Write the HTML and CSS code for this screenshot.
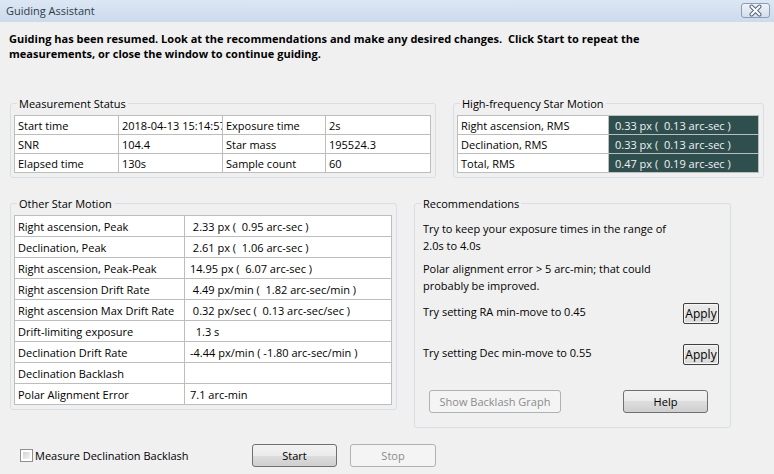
FILE: index.html
```html
<!DOCTYPE html>
<html>
<head>
<meta charset="utf-8">
<title>Guiding Assistant</title>
<link rel="stylesheet" href="styles.css">
</head>
<body>
<div class="window">
  <div class="titlebar">
    <span class="title">Guiding Assistant</span>
    <span class="close">
      <svg width="27" height="13" viewBox="0 0 27 13">
        <path d="M9.5 2.5 L17.5 10.5 M17.5 2.5 L9.5 10.5" stroke="#56657a" stroke-width="4" stroke-linecap="round" fill="none"/>
        <path d="M9.5 2.5 L17.5 10.5 M17.5 2.5 L9.5 10.5" stroke="#ffffff" stroke-width="2" stroke-linecap="round" fill="none"/>
      </svg>
    </span>
  </div>

  <p class="intro">Guiding has been resumed. Look at the recommendations and make any desired changes.&nbsp; Click Start to repeat the<br>measurements, or close the window to continue guiding.</p>

  <div class="row row1">
    <fieldset class="group g-meas">
      <legend>Measurement Status</legend>
      <table class="grid meas">
        <colgroup><col class="c1"><col class="c2"><col class="c3"><col class="c4"></colgroup>
        <tr><td>Start time</td><td>2018-04-13 15:14:57</td><td>Exposure time</td><td>2s</td></tr>
        <tr><td>SNR</td><td>104.4</td><td>Star mass</td><td>195524.3</td></tr>
        <tr><td>Elapsed time</td><td>130s</td><td>Sample count</td><td>60</td></tr>
      </table>
    </fieldset>
    <fieldset class="group g-hf">
      <legend>High-frequency Star Motion</legend>
      <table class="grid hf">
        <colgroup><col class="h1"><col class="h2"></colgroup>
        <tr><td>Right ascension, RMS</td><td class="dark">0.33 px (  0.13 arc-sec )</td></tr>
        <tr><td>Declination, RMS</td><td class="dark">0.33 px (  0.13 arc-sec )</td></tr>
        <tr><td>Total, RMS</td><td class="dark">0.47 px (  0.19 arc-sec )</td></tr>
      </table>
    </fieldset>
  </div>

  <div class="row row2">
    <fieldset class="group g-other">
      <legend>Other Star Motion</legend>
      <table class="grid other">
        <colgroup><col class="o1"><col class="o2"></colgroup>
        <tr><td>Right ascension, Peak</td><td class="val"> 2.33 px (  0.95 arc-sec )</td></tr>
        <tr><td>Declination, Peak</td><td class="val"> 2.61 px (  1.06 arc-sec )</td></tr>
        <tr><td>Right ascension, Peak-Peak</td><td class="val">14.95 px (  6.07 arc-sec )</td></tr>
        <tr><td>Right ascension Drift Rate</td><td class="val"> 4.49 px/min (  1.82 arc-sec/min )</td></tr>
        <tr><td>Right ascension Max Drift Rate</td><td class="val"> 0.32 px/sec (  0.13 arc-sec/sec )</td></tr>
        <tr><td>Drift-limiting exposure</td><td class="val">  1.3 s</td></tr>
        <tr><td>Declination Drift Rate</td><td class="val">-4.44 px/min ( -1.80 arc-sec/min )</td></tr>
        <tr><td>Declination Backlash</td><td class="val"></td></tr>
        <tr><td>Polar Alignment Error</td><td class="val">7.1 arc-min</td></tr>
      </table>
    </fieldset>
    <fieldset class="group g-rec">
      <legend>Recommendations</legend>
      <p class="rec-p first">Try to keep your exposure times in the range of<br>2.0s to 4.0s</p>
      <p class="rec-p second">Polar alignment error &gt; 5 arc-min; that could<br>probably be improved.</p>
      <div class="rec-row ra"><span>Try setting RA min-move to 0.45</span><button class="apply">Apply</button></div>
      <div class="rec-row dec"><span>Try setting Dec min-move to 0.55</span><button class="apply">Apply</button></div>
      <div class="rec-buttons">
        <button class="btn disabled backlash">Show Backlash Graph</button>
        <button class="btn help">Help</button>
      </div>
    </fieldset>
  </div>

  <div class="footer">
    <label class="check"><span class="box"></span><span>Measure Declination Backlash</span></label>
    <button class="btn start">Start</button>
    <button class="btn disabled stop">Stop</button>
  </div>
</div>
</body>
</html>
```

FILE: styles.css
```css
* { box-sizing: border-box; }

html, body {
  margin: 0;
  padding: 0;
}

body {
  font-family: "Open Sans", "Segoe UI", sans-serif;
  font-size: 11px;
  color: #000;
  background: #f0f0f0;
}

.window {
  width: 774px;
  height: 474px;
  background: #f0f0f0;
  overflow: hidden;
}

.titlebar {
  height: 22px;
  background: linear-gradient(#dce7f4, #ccdaec);
  display: flex;
  justify-content: space-between;
  align-items: flex-start;
  padding: 0 4px 0 6px;
}

.title {
  line-height: 22px;
  color: #2f3b49;
  font-size: 11px;
}

.close {
  margin-top: 3px;
  width: 29px;
  height: 15px;
  border: 1px solid #8d9cb0;
  border-radius: 3px;
  background: linear-gradient(#eef3f9, #d3deec);
  display: flex;
  align-items: center;
  justify-content: center;
}

.close svg { display: block; }

.intro {
  margin: 9px 0 0 9px;
  font-weight: 700;
  line-height: 15px;
  letter-spacing: 0.01px;
}

.row {
  display: flex;
  align-items: flex-start;
  gap: 17px;
  margin-left: 10px;
}

.row1 { margin-top: 35px; }
.row2 { margin-top: 18px; }

.group {
  margin: 0;
  border: 1px solid #d5dfe5;
  border-radius: 3px;
  padding: 4px 4px 4px 3px;
  min-width: 0;
}

.group legend {
  padding: 0 2px;
  margin-left: 3px;
  line-height: 15px;
}

.g-meas { width: 426px; }
.g-hf { width: 311px; }
.g-other { width: 387px; }
.g-rec { width: 317px; padding: 0 11px 14px 8px; }
.g-rec legend { margin-left: -2px; }

.grid {
  border-collapse: collapse;
  table-layout: fixed;
  width: 100%;
  background: #fff;
}

.grid td {
  border: 1px solid #bdbdbd;
  padding: 1px 3px 0 3px;
  white-space: nowrap;
  overflow: hidden;
  height: 19px;
  line-height: 17px;
  vertical-align: middle;
}

.meas .c1 { width: 104px; }
.meas .c2 { width: 104px; }
.meas .c3 { width: 103px; }
.meas .c4 { width: 105px; }

.hf .h1 { width: 151px; }
.hf td.dark {
  background: #2f4f4f;
  color: #f2f2f2;
  padding-left: 6px;
  white-space: pre;
}

.other td { height: 21px; padding-top: 0; }
.other .o1 { width: 170px; }
.other td.val { padding-left: 5px; white-space: pre; }

.rec-p {
  margin: 0;
  line-height: 17px;
}
.rec-p.first { margin-top: 9px; }
.rec-p.second { margin-top: 6px; }

.rec-row {
  display: flex;
  justify-content: space-between;
  align-items: flex-start;
  line-height: 17px;
}
.rec-row.ra { margin-top: 9px; }
.rec-row.dec { margin-top: 20px; }

.apply {
  font-family: inherit;
  font-size: 12px;
  width: 36px;
  height: 21px;
  padding: 0;
  border: 1px solid #3f3f3f;
  border-radius: 2px;
  background: linear-gradient(#ececec, #dadada);
  box-shadow: inset 0 0 0 1px #f6f6f6;
  color: #000;
  line-height: 17px;
}

.rec-buttons {
  display: flex;
  gap: 62px;
  margin-top: 25px;
  padding-left: 6px;
}

.btn {
  font-family: inherit;
  font-size: 11px;
  height: 23px;
  padding: 0;
  border: 1px solid #707070;
  border-radius: 3px;
  background: linear-gradient(#f2f2f2 0%, #ebebeb 50%, #dddddd 50%, #cfcfcf 100%);
  color: #000;
}

.btn.disabled {
  border-color: #adb2b5;
  background: #f4f4f4;
  color: #8b8b8b;
}

.backlash { width: 132px; }
.help { width: 85px; }

.footer {
  display: flex;
  align-items: center;
  margin-top: 16px;
  padding-left: 20px;
}

.check {
  display: flex;
  align-items: center;
  gap: 2px;
  width: 232px;
}

.check .box {
  width: 13px;
  height: 13px;
  border: 1px solid #8f8f8f;
  padding: 2px;
  background: linear-gradient(135deg, #d2d2d2, #f6f6f6) content-box, #fff;
}

.start { width: 85px; }
.stop { width: 86px; margin-left: 13px; }
```
